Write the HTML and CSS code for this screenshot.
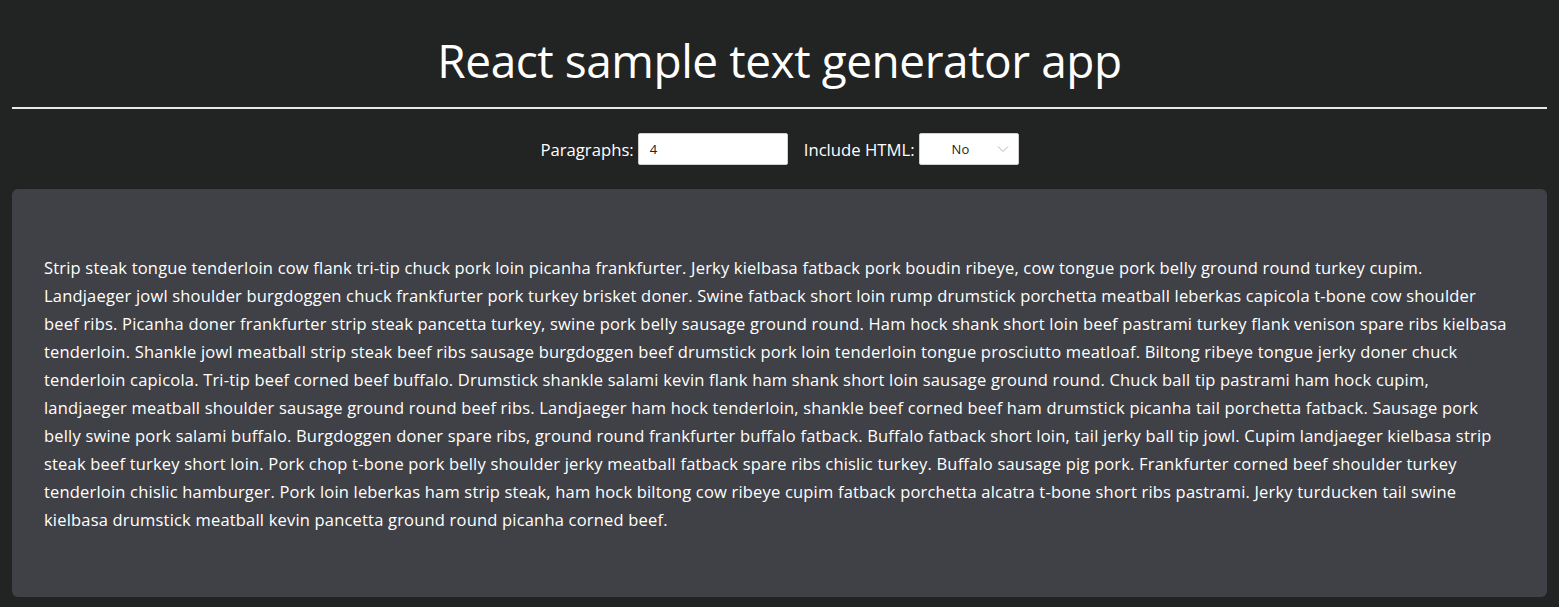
FILE: index.html
```html
<!DOCTYPE html>
<html lang="en">
<head>
<meta charset="utf-8">
<title>React sample text generator app</title>
<link rel="stylesheet" href="styles.css">
</head>
<body>
<div class="app">
  <h1 class="title">React sample text generator app</h1>
  <hr class="rule">
  <form class="controls">
    <label class="field">
      <span class="label">Paragraphs:</span>
      <span class="input">4</span>
    </label>
    <label class="field">
      <span class="label">Include HTML:</span>
      <span class="select"><span class="select-value">No</span>
        <svg class="chevron" width="12" height="8" viewBox="0 0 12 8"><path d="M1 1.5 L6 6.5 L11 1.5" fill="none" stroke="#b5b5b5" stroke-width="1"/></svg>
      </span>
    </label>
  </form>
  <div class="output">
    <p class="text">Strip steak tongue tenderloin cow flank tri-tip chuck pork loin picanha frankfurter. Jerky kielbasa fatback pork boudin ribeye, cow tongue pork belly ground round turkey cupim.<br>Landjaeger jowl shoulder burgdoggen chuck frankfurter pork turkey brisket doner. Swine fatback short loin rump drumstick porchetta meatball leberkas capicola t-bone cow shoulder<br>beef ribs. Picanha doner frankfurter strip steak pancetta turkey, swine pork belly sausage ground round. Ham hock shank short loin beef pastrami turkey flank venison spare ribs kielbasa<br>tenderloin. Shankle jowl meatball strip steak beef ribs sausage burgdoggen beef drumstick pork loin tenderloin tongue prosciutto meatloaf. Biltong ribeye tongue jerky doner chuck<br>tenderloin capicola. Tri-tip beef corned beef buffalo. Drumstick shankle salami kevin flank ham shank short loin sausage ground round. Chuck ball tip pastrami ham hock cupim,<br>landjaeger meatball shoulder sausage ground round beef ribs. Landjaeger ham hock tenderloin, shankle beef corned beef ham drumstick picanha tail porchetta fatback. Sausage pork<br>belly swine pork salami buffalo. Burgdoggen doner spare ribs, ground round frankfurter buffalo fatback. Buffalo fatback short loin, tail jerky ball tip jowl. Cupim landjaeger kielbasa strip<br>steak beef turkey short loin. Pork chop t-bone pork belly shoulder jerky meatball fatback spare ribs chislic turkey. Buffalo sausage pig pork. Frankfurter corned beef shoulder turkey<br>tenderloin chislic hamburger. Pork loin leberkas ham strip steak, ham hock biltong cow ribeye cupim fatback porchetta alcatra t-bone short ribs pastrami. Jerky turducken tail swine<br>kielbasa drumstick meatball kevin pancetta ground round picanha corned beef.</p>
  </div>
</div>
</body>
</html>
```

FILE: styles.css
```css
html, body {
  margin: 0;
  padding: 0;
  background: #222323;
  height: 100%;
}
body {
  font-family: "Open Sans", "Noto Sans", sans-serif;
  color: #ffffff;
}
.app {
  padding: 0 12px 10px;
}
.title {
  margin: 0;
  padding-top: 26px;
  height: 68px;
  font-size: 46px;
  font-weight: 400;
  line-height: 68px;
  text-align: center;
  letter-spacing: -0.45px;
}
.rule {
  margin: 13px 0 0;
  border: 0;
  height: 2px;
  background: #e8e8e8;
}
.controls {
  display: flex;
  justify-content: center;
  align-items: center;
  gap: 16px;
  margin: 24px 0 24px;
}
.field {
  display: flex;
  align-items: center;
  gap: 4px;
}
.label {
  font-size: 16.7px;
}
.input {
  box-sizing: border-box;
  width: 150px;
  height: 32px;
  background: #fff;
  border: 1px solid #cfcfcf;
  border-radius: 2px;
  color: #222;
  font-size: 13px;
  line-height: 30px;
  padding-left: 11px;
}
.select {
  box-sizing: border-box;
  width: 100px;
  height: 32px;
  background: #fff;
  border: 1px solid #cfcfcf;
  border-radius: 2px;
  color: #222;
  font-size: 13px;
  display: flex;
  align-items: center;
  padding-left: 32px;
  gap: 28px;
}
.chevron {
  display: block;
}
.output {
  background: #404146;
  border-radius: 6px;
  padding: 65px 32px 63px;
  height: 408px;
  box-sizing: border-box;
}
.text {
  margin: 0;
  font-size: 16.5px;
  line-height: 28px;
  white-space: nowrap;
  letter-spacing: 0.19px;
}
```
